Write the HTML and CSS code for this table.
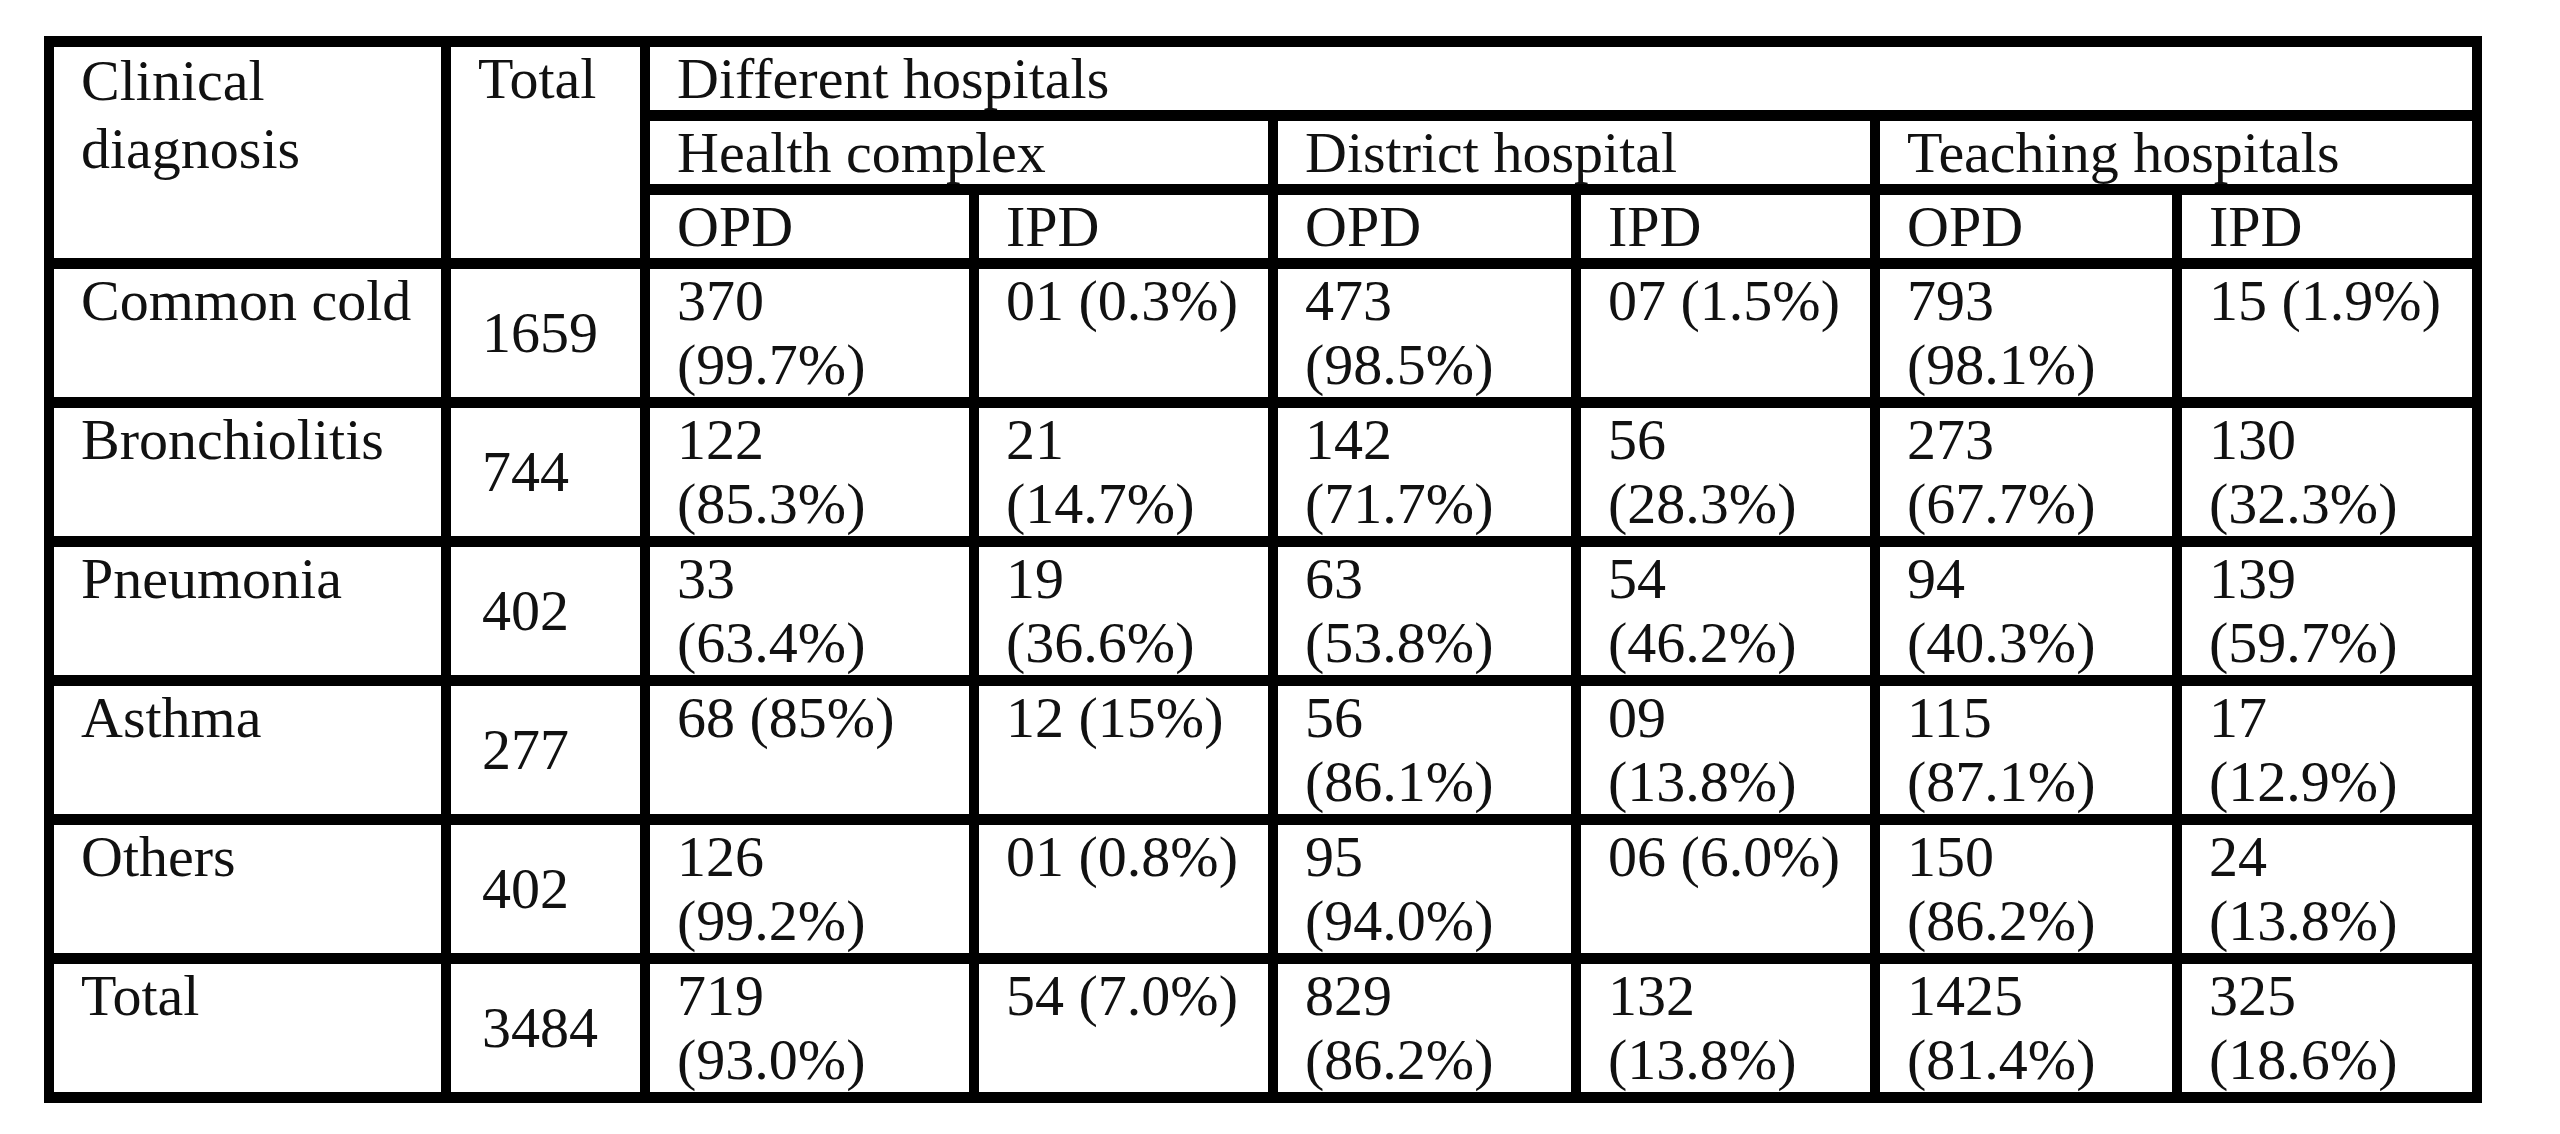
FILE: index.html
```html
<!DOCTYPE html>
<html lang="en">
<head>
<meta charset="utf-8">
<title>Clinical diagnosis by hospital</title>
<link rel="stylesheet" href="styles.css">
</head>
<body>
<table class="grid">
  <colgroup>
    <col class="c-diag">
    <col class="c-total">
    <col class="c-hc-opd">
    <col class="c-hc-ipd">
    <col class="c-dh-opd">
    <col class="c-dh-ipd">
    <col class="c-th-opd">
    <col class="c-th-ipd">
  </colgroup>
  <thead>
    <tr class="hrow">
      <th rowspan="3" class="tall">Clinical<br>diagnosis</th>
      <th rowspan="3">Total</th>
      <th colspan="6">Different hospitals</th>
    </tr>
    <tr class="hrow">
      <th colspan="2">Health complex</th>
      <th colspan="2">District hospital</th>
      <th colspan="2">Teaching hospitals</th>
    </tr>
    <tr class="hrow">
      <th>OPD</th><th>IPD</th>
      <th>OPD</th><th>IPD</th>
      <th>OPD</th><th>IPD</th>
    </tr>
  </thead>
  <tbody>
    <tr class="brow">
      <td>Common cold</td><td class="num">1659</td>
      <td>370<br>(99.7%)</td><td>01 (0.3%)</td>
      <td>473<br>(98.5%)</td><td>07 (1.5%)</td>
      <td>793<br>(98.1%)</td><td>15 (1.9%)</td>
    </tr>
    <tr class="brow">
      <td>Bronchiolitis</td><td class="num">744</td>
      <td>122<br>(85.3%)</td><td>21<br>(14.7%)</td>
      <td>142<br>(71.7%)</td><td>56<br>(28.3%)</td>
      <td>273<br>(67.7%)</td><td>130<br>(32.3%)</td>
    </tr>
    <tr class="brow">
      <td>Pneumonia</td><td class="num">402</td>
      <td>33<br>(63.4%)</td><td>19<br>(36.6%)</td>
      <td>63<br>(53.8%)</td><td>54<br>(46.2%)</td>
      <td>94<br>(40.3%)</td><td>139<br>(59.7%)</td>
    </tr>
    <tr class="brow">
      <td>Asthma</td><td class="num">277</td>
      <td>68 (85%)</td><td>12 (15%)</td>
      <td>56<br>(86.1%)</td><td>09<br>(13.8%)</td>
      <td>115<br>(87.1%)</td><td>17<br>(12.9%)</td>
    </tr>
    <tr class="brow">
      <td>Others</td><td class="num">402</td>
      <td>126<br>(99.2%)</td><td>01 (0.8%)</td>
      <td>95<br>(94.0%)</td><td>06 (6.0%)</td>
      <td>150<br>(86.2%)</td><td>24<br>(13.8%)</td>
    </tr>
    <tr class="brow">
      <td>Total</td><td class="num">3484</td>
      <td>719<br>(93.0%)</td><td>54 (7.0%)</td>
      <td>829<br>(86.2%)</td><td>132<br>(13.8%)</td>
      <td>1425<br>(81.4%)</td><td>325<br>(18.6%)</td>
    </tr>
  </tbody>
</table>
</body>
</html>
```

FILE: styles.css
```css
html, body {
  margin: 0;
  padding: 0;
  background: #ffffff;
}

body {
  font-family: "Liberation Serif", "Times New Roman", serif;
  font-size: 58px;
  line-height: 64px;
  color: #111111;
}

.grid {
  margin: 36px 0 0 44px;
  width: 2438px;
  table-layout: fixed;
  border-collapse: separate;
  border-spacing: 10px 11px;
  background: #000000;
}

.c-diag { width: 387px; }
.c-total { width: 189px; }
.c-hc-opd { width: 319px; }
.c-hc-ipd { width: 289px; }
.c-dh-opd { width: 293px; }
.c-dh-ipd { width: 289px; }
.c-th-opd { width: 292px; }
.c-th-ipd { width: 290px; }

.grid th,
.grid td {
  background: #ffffff;
  padding: 0 8px 0 27px;
  text-align: left;
  vertical-align: top;
  font-weight: normal;
  white-space: nowrap;
}

.hrow { height: 63px; }
.hrow th { line-height: 62px; padding-top: 1px; }
.hrow th.tall { line-height: 68px; padding-top: 0; }
.brow { height: 128px; }

.grid td.num {
  vertical-align: middle;
  padding-left: 31px;
}
```
